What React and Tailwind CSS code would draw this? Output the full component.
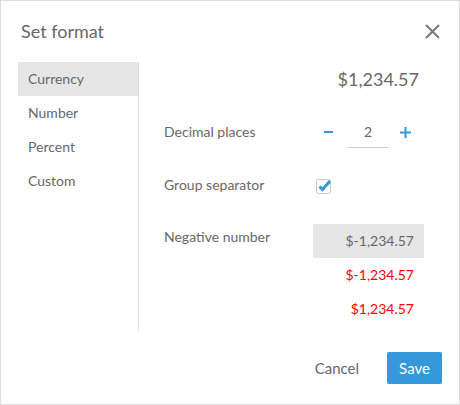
import React from "react";

export default function App() {
  const font = { fontFamily: "Lato, 'Open Sans', sans-serif" };
  return (
    <div
      className="w-[460px] h-[405px] bg-white border border-[#dddddd] flex flex-col text-[#686868]"
      style={font}
    >
      {/* Header */}
      <div className="h-[61px] flex items-center justify-between pl-[20px] pr-[19px] pb-[1px]">
        <div className="text-[18px] leading-none">Set format</div>
        <button className="w-[16px] h-[16px] flex items-center justify-center">
          <svg width="15" height="15" viewBox="0 0 15 15">
            <path d="M1 1 L14 14 M14 1 L1 14" stroke="#777" strokeWidth="2" />
          </svg>
        </button>
      </div>

      {/* Body */}
      <div className="flex-1 flex pl-[17px] min-h-0">
        <div className="w-[121px] border-r border-[#dddddd] h-[269px] flex flex-col">
          <div className="h-[34px] flex items-center pl-[10px] pb-[2px] bg-[#e6e6e6] text-[14px]">Currency</div>
          <div className="h-[34px] flex items-center pl-[10px] pb-[2px] text-[14px]">Number</div>
          <div className="h-[34px] flex items-center pl-[10px] pb-[2px] text-[14px]">Percent</div>
          <div className="h-[34px] flex items-center pl-[10px] pb-[2px] text-[14px]">Custom</div>
        </div>

        <div className="flex flex-col pl-[25px] w-[286px] text-[14px]">
          <div className="h-[36px] flex items-center justify-end pr-[6px] pb-[1px] text-[18px]">$1,234.57</div>

          <div className="mt-[17px] h-[34px] flex items-center">
            <div className="w-[149px] pb-[1px]">Decimal places</div>
            <div className="flex items-center">
              <button className="w-[30px] h-[32px] flex items-center justify-center">
                <svg width="9" height="2" viewBox="0 0 9 2">
                  <rect x="0" y="0" width="9" height="2" fill="#3498db" />
                </svg>
              </button>
              <div className="ml-[5px] w-[40px] h-[32px] border-b border-[#cccccc] flex items-center justify-center">2</div>
              <button className="ml-[5px] w-[24px] h-[32px] flex items-center justify-center">
                <svg width="11" height="11" viewBox="0 0 11 11">
                  <rect x="0" y="4.5" width="11" height="2" fill="#3498db" />
                  <rect x="4.5" y="0" width="2" height="11" fill="#3498db" />
                </svg>
              </button>
            </div>
          </div>

          <div className="mt-[19px] h-[34px] flex items-center">
            <div className="w-[149px] pb-[1px]">Group separator</div>
            <div className="pl-[3px] flex items-center">
              <svg width="18" height="17" viewBox="0 0 18 17">
                <rect x="0.5" y="2.5" width="14" height="14" rx="2" fill="white" stroke="#c8c8c8" />
                <path d="M3.5 9.5 L6.5 12.5 L14 4" fill="none" stroke="#3498db" strokeWidth="3" />
              </svg>
            </div>
          </div>

          <div className="mt-[22px] flex">
            <div className="w-[149px] pt-[3px] leading-[20px]">Negative number</div>
            <div className="w-[111px] flex flex-col">
              <div className="h-[34px] flex items-center justify-end pr-[10px] pb-[2px] bg-[#e6e6e6]">$-1,234.57</div>
              <div className="h-[34px] flex items-center justify-end pr-[10px] pb-[2px] text-[#ff0000]">$-1,234.57</div>
              <div className="h-[34px] flex items-center justify-end pr-[10px] pb-[2px] text-[#ff0000]">$1,234.57</div>
            </div>
          </div>
        </div>
      </div>

      {/* Footer */}
      <div className="pt-[19px] pb-[20px] pr-[17px] flex justify-end items-center gap-[28px]">
        <button className="text-[15px] text-[#686868]">Cancel</button>
        <button className="w-[55px] h-[32px] rounded-[2px] bg-[#3498db] text-white text-[15px]">Save</button>
      </div>
    </div>
  );
}
